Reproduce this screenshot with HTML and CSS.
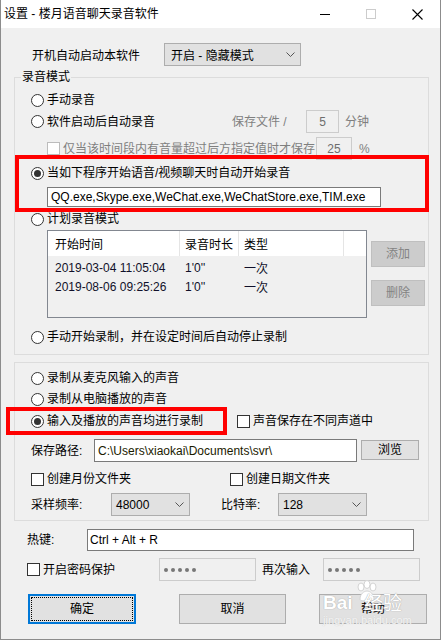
FILE: index.html
```html
<!DOCTYPE html>
<html lang="zh-CN">

<head>
    <meta charset="UTF-8">
    <meta name="viewport" content="width=device-width, initial-scale=1.0">
    <title>设置 - 楼月语音聊天录音软件</title>
    <link rel="stylesheet" href="styles.css">
</head>

<body>
    <div class="window">
        <div class="titlebar">
            <span class="title">设置 - 楼月语音聊天录音软件</span>
            <div class="caption">
                <span class="cap-btn">
                    <svg width="10" height="10" viewBox="0 0 10 10"><path d="M0 5.5h10" stroke="#000" stroke-width="1"/></svg>
                </span>
                <span class="cap-btn">
                    <svg width="10" height="10" viewBox="0 0 10 10"><rect x="0.5" y="0.5" width="9" height="9" fill="none" stroke="#cccccc"/></svg>
                </span>
                <span class="cap-btn">
                    <svg width="11" height="11" viewBox="0 0 11 11"><path d="M0.5 0.5l10 10M10.5 0.5l-10 10" stroke="#000" stroke-width="1.1"/></svg>
                </span>
            </div>
        </div>

        <div class="content">
            <div class="startup">
                <span class="startup-label">开机自动启动本软件</span>
                <div class="combo combo-startup">
                    <span>开启 - 隐藏模式</span>
                    <svg class="chev" width="9" height="5" viewBox="0 0 9 5"><path d="M0.5 0.5l4 4 4-4" fill="none" stroke="#555"/></svg>
                </div>
            </div>

            <!-- 录音模式 -->
            <div class="group group-mode">
                <span class="group-title">录音模式</span>

                <div class="opt">
                    <span class="radio"></span>
                    <span class="opt-text">手动录音</span>
                </div>

                <div class="opt opt-tall opt-auto">
                    <span class="radio"></span>
                    <span class="opt-text auto-text">软件启动后自动录音</span>
                    <span class="muted save-label">保存文件 /</span>
                    <span class="field field-off field-min">5</span>
                    <span class="muted unit">分钟</span>
                </div>

                <div class="opt opt-tall opt-vol">
                    <span class="check check-off"></span>
                    <span class="muted vol-text">仅当该时间段内有音量超过后方指定值时才保存</span>
                    <span class="field field-off field-pct">25</span>
                    <span class="muted unit-pct">%</span>
                </div>

                <div class="mark mark-chat">
                    <div class="opt">
                        <span class="radio on"></span>
                        <span class="opt-text">当如下程序开始语音/视频聊天时自动开始录音</span>
                    </div>
                    <div class="field field-exe">QQ.exe,Skype.exe,WeChat.exe,WeChatStore.exe,TIM.exe</div>
                </div>

                <div class="opt opt-plan">
                    <span class="radio"></span>
                    <span class="opt-text">计划录音模式</span>
                </div>

                <div class="plan">
                    <div class="list">
                        <div class="list-row list-head">
                            <span class="c1">开始时间</span>
                            <span class="c2">录音时长</span>
                            <span class="c3">类型</span>
                            <span class="c4"></span>
                        </div>
                        <div class="list-body">
                            <div class="list-row">
                                <span class="c1">2019-03-04 11:05:04</span>
                                <span class="c2">1'0''</span>
                                <span class="c3">一次</span>
                            </div>
                            <div class="list-row">
                                <span class="c1">2019-08-06 09:25:26</span>
                                <span class="c2">1'0''</span>
                                <span class="c3">一次</span>
                            </div>
                        </div>
                    </div>
                    <div class="plan-btns">
                        <span class="btn btn-off">添加</span>
                        <span class="btn btn-off">删除</span>
                    </div>
                </div>

                <div class="opt opt-timed">
                    <span class="radio"></span>
                    <span class="opt-text">手动开始录制，并在设定时间后自动停止录制</span>
                </div>
            </div>

            <!-- 声音来源 -->
            <div class="group group-src">
                <div class="opt opt-mic">
                    <span class="radio"></span>
                    <span class="opt-text">录制从麦克风输入的声音</span>
                </div>
                <div class="opt opt-pc">
                    <span class="radio"></span>
                    <span class="opt-text">录制从电脑播放的声音</span>
                </div>
                <div class="both-row">
                    <div class="mark mark-both">
                        <span class="radio on"></span>
                        <span class="opt-text">输入及播放的声音均进行录制</span>
                    </div>
                    <span class="check check-ch"></span>
                    <span class="opt-text">声音保存在不同声道中</span>
                </div>

                <div class="path-row">
                    <span class="path-label">保存路径:</span>
                    <span class="field field-path">C:\Users\xiaokai\Documents\svr\</span>
                    <span class="btn btn-browse">浏览</span>
                </div>

                <div class="opt opt-folders">
                    <span class="folder">
                        <span class="check"></span>
                        <span class="opt-text">创建月份文件夹</span>
                    </span>
                    <span class="check"></span>
                    <span class="opt-text">创建日期文件夹</span>
                </div>

                <div class="rate-row">
                    <span class="rate-label">采样频率:</span>
                    <div class="combo combo-rate">
                        <span>48000</span>
                        <svg class="chev" width="9" height="5" viewBox="0 0 9 5"><path d="M0.5 0.5l4 4 4-4" fill="none" stroke="#555"/></svg>
                    </div>
                    <span class="bit-label">比特率:</span>
                    <div class="combo combo-bit">
                        <span>128</span>
                        <svg class="chev" width="9" height="5" viewBox="0 0 9 5"><path d="M0.5 0.5l4 4 4-4" fill="none" stroke="#555"/></svg>
                    </div>
                </div>
            </div>

            <div class="hotkey-row">
                <span class="hotkey-label">热键:</span>
                <span class="field field-hotkey">Ctrl + Alt + R</span>
            </div>

            <div class="pwd-row">
                <span class="pwd-check">
                    <span class="check"></span>
                    <span class="opt-text">开启密码保护</span>
                </span>
                <span class="field field-off field-pwd"><i></i><i></i><i></i><i></i><i></i></span>
                <span class="again">再次输入</span>
                <span class="field field-off field-pwd"><i></i><i></i><i></i><i></i><i></i></span>
            </div>

            <div class="actions">
                <span class="btn btn-ok">确定</span>
                <span class="btn btn-cancel">取消</span>
                <span class="btn btn-help">帮助</span>
                <div class="watermark">
                    <svg class="paw" width="26" height="22" viewBox="0 0 26 22">
                        <g fill="#fff" stroke="#d4d4d4" stroke-width="1">
                            <ellipse cx="7" cy="7" rx="3" ry="4"/>
                            <ellipse cx="13" cy="4.5" rx="3" ry="4"/>
                            <ellipse cx="19" cy="7" rx="3" ry="4"/>
                            <path d="M6 19c0-5 4-8 7-8s7 3 7 8c0 2-3 2-7 2s-7 0-7-2z"/>
                        </g>
                    </svg>
                    <span class="wm-bai">Bai</span>
                    <span class="wm-jy">经验</span>
                    <span class="wm-url">jingyan.baidu.com</span>
                </div>
            </div>
        </div>
    </div>
</body>

</html>
```

FILE: styles.css
```css
* {
    padding: 0;
    margin: 0;
    box-sizing: border-box;
}

body {
    font-family: "Liberation Sans", "Noto Sans CJK SC", sans-serif;
    font-size: 12px;
    color: #000;
    background: #fff;
}

.window {
    width: 441px;
    height: 640px;
    border: 1px solid #8c8c8c;
    border-top: none;
    background: #f0f0f0;
    display: flex;
    flex-direction: column;
    overflow: hidden;
}

/* title bar */
.titlebar {
    height: 28px;
    background: #fff;
    display: flex;
    align-items: center;
}

.title {
    padding-left: 3px;
    line-height: 16px;
}

.caption {
    margin-left: auto;
    display: flex;
    height: 28px;
}

.cap-btn {
    width: 46px;
    display: flex;
    align-items: center;
    justify-content: center;
}

/* common bits */
.content {
    display: flex;
    flex-direction: column;
}

.opt {
    display: flex;
    align-items: center;
    height: 18px;
    line-height: 16px;
}

.opt-tall {
    height: 23px;
}

.opt-text {
    margin-left: 3px;
    white-space: nowrap;
}

.muted {
    color: #7f7f7f;
    white-space: nowrap;
}

.radio {
    width: 13px;
    height: 13px;
    flex: none;
    border: 1px solid #333;
    border-radius: 50%;
    background: #fff;
    display: inline-flex;
    align-items: center;
    justify-content: center;
    margin-left: 16px;
}

.radio.on::after {
    content: "";
    width: 7px;
    height: 7px;
    border-radius: 50%;
    background: #333;
}

.check {
    width: 13px;
    height: 13px;
    flex: none;
    border: 1px solid #333;
    background: #fff;
}

.check-off {
    border-color: #bcbcbc;
}

.field {
    display: flex;
    align-items: center;
    background: #fff;
    border: 1px solid #7a7a7a;
    white-space: nowrap;
    overflow: hidden;
}

.field-off {
    background: #f0f0f0;
    border-color: #cccccc;
    color: #6d6d6d;
    justify-content: center;
}

.btn {
    display: flex;
    align-items: center;
    justify-content: center;
    background: #e1e1e1;
    border: 1px solid #adadad;
    line-height: 16px;
}

.btn-off {
    background: #cccccc;
    border-color: #bfbfbf;
    color: #838383;
}

.combo {
    display: flex;
    align-items: center;
    background: #e1e1e1;
    border: 1px solid #adadad;
    padding-left: 4px;
}

.chev {
    margin-left: auto;
    margin-right: 5px;
}

/* startup row */
.startup {
    display: flex;
    align-items: center;
    margin-top: 15px;
    height: 23px;
}

.startup-label {
    width: 163px;
    padding-left: 31px;
}

.combo-startup {
    width: 137px;
    height: 23px;
    padding-left: 6px;
}

/* group boxes */
.group {
    position: relative;
    margin-left: 13px;
    width: 415px;
    border: 1px solid #dcdcdc;
}

.group-title {
    position: absolute;
    top: -9px;
    left: 6px;
    padding: 0 1px;
    line-height: 16px;
    background: #f0f0f0;
}

.group-mode {
    margin-top: 11px;
    padding-top: 13px;
    padding-bottom: 8px;
}

.opt-auto {
    margin-top: 1px;
}

.auto-text {
    width: 185px;
}

.save-label {
    width: 74px;
}

.field-min {
    width: 33px;
    height: 23px;
}

.unit {
    margin-left: 6px;
}

.opt-vol {
    margin-top: 4px;
}

.opt-vol .check {
    margin-left: 32px;
}

.vol-text {
    width: 253px;
    margin-left: 3px;
}

.field-pct {
    width: 36px;
    height: 23px;
}

.unit-pct {
    margin-left: 7px;
}

/* red marks */
.mark {
    outline: 4px solid #ff0000;
    position: relative;
}

.mark-chat {
    margin-top: -1px;
    margin-left: 4px;
    width: 406px;
    height: 49px;
    padding-top: 5px;
}

.mark-chat .radio {
    margin-left: 12px;
}

.field-exe {
    margin: 5px 0 0 28px;
    width: 334px;
    height: 20px;
    padding-left: 3px;
}

.opt-plan {
    margin-top: 2px;
}

/* schedule list */
.plan {
    display: flex;
    align-items: flex-start;
    margin-top: 2px;
}

.list {
    margin-left: 32px;
    width: 320px;
    height: 88px;
    border: 1px solid #828790;
}

.list-row {
    display: flex;
    height: 19px;
    align-items: center;
    white-space: nowrap;
}

.list-head {
    height: 25px;
    background: #fff;
    align-items: stretch;
}

.list-head span {
    display: flex;
    align-items: center;
    border-right: 1px solid #e5e5e5;
}

.list-head .c4 {
    border-right: none;
}

.c1 {
    width: 132px;
    padding-left: 7px;
}

.c2 {
    width: 59px;
    padding-left: 5px;
}

.c3 {
    width: 105px;
    padding-left: 5px;
}

.c4 {
    flex: 1;
}

.list-body {
    padding-top: 2px;
    color: #10102a;
}

.plan-btns {
    margin-left: 4px;
    padding-top: 11px;
    display: flex;
    flex-direction: column;
    gap: 13px;
}

.plan-btns .btn {
    width: 54px;
    height: 26px;
}

.opt-timed {
    margin-top: 10px;
}

/* source group */
.group-src {
    margin-top: 7px;
    padding-top: 6px;
    padding-bottom: 4px;
}

.opt-pc {
    margin-top: 3px;
}

.both-row {
    display: flex;
    align-items: center;
    margin-top: 3px;
    height: 20px;
    line-height: 16px;
}

.mark-both {
    display: flex;
    align-items: center;
    margin-left: -5px;
    width: 213px;
    height: 20px;
    padding-left: 21px;
}

.mark-both .radio {
    margin-left: 0;
}

.check-ch {
    margin-left: 14px;
}

.path-row {
    display: flex;
    align-items: flex-start;
    margin-top: 8px;
    line-height: 16px;
}

.path-label {
    width: 79px;
    padding-left: 16px;
    height: 23px;
    display: flex;
    align-items: center;
}

.field-path {
    width: 263px;
    height: 23px;
    padding-left: 3px;
    color: #1a1a00;
}

.btn-browse {
    margin: 1px 0 0 4px;
    width: 58px;
    height: 20px;
}

.opt-folders {
    margin-top: 8px;
}

.folder {
    display: flex;
    align-items: center;
    width: 215px;
}

.opt-folders .check:first-child {
    margin-left: 16px;
}

.rate-row {
    display: flex;
    align-items: center;
    margin-top: 5px;
    height: 23px;
    line-height: 16px;
}

.rate-label {
    width: 96px;
    padding-left: 16px;
}

.combo-rate {
    width: 79px;
    height: 23px;
}

.bit-label {
    margin-left: 31px;
    width: 57px;
}

.combo-bit {
    width: 89px;
    height: 23px;
}

/* bottom rows */
.hotkey-row {
    display: flex;
    align-items: center;
    margin-top: 8px;
    height: 22px;
    line-height: 16px;
}

.hotkey-label {
    width: 86px;
    padding-left: 26px;
}

.field-hotkey {
    width: 327px;
    height: 22px;
    padding-left: 2px;
}

.pwd-row {
    display: flex;
    align-items: center;
    margin-top: 7px;
    height: 23px;
    line-height: 16px;
}

.pwd-check {
    display: flex;
    align-items: center;
    width: 158px;
    padding-left: 26px;
}

.field-pwd {
    width: 97px;
    height: 23px;
    justify-content: flex-start;
    padding-left: 4px;
    gap: 3px;
}

.field-pwd i {
    width: 4px;
    height: 4px;
    border-radius: 50%;
    background: #777;
}

.again {
    width: 67px;
    padding-left: 6px;
}

.actions {
    position: relative;
    display: flex;
    margin-top: 13px;
    height: 30px;
}

.actions .btn {
    height: 30px;
}

.btn-ok {
    margin-left: 27px;
    width: 108px;
    border: 2px solid #0078d7;
    outline: 1px dotted #000;
    outline-offset: -4px;
}

.btn-cancel {
    margin-left: 43px;
    width: 107px;
}

.btn-help {
    margin-left: 33px;
    width: 108px;
}

/* baidu watermark over the help button */
.watermark {
    position: absolute;
    left: 321px;
    top: -14px;
    width: 90px;
    height: 46px;
    color: #fff;
    pointer-events: none;
}

.paw {
    position: absolute;
    left: 32px;
    top: 0;
}

.wm-bai {
    position: absolute;
    left: 1px;
    top: 13px;
    font-size: 19px;
    font-weight: bold;
    line-height: 20px;
    text-shadow: 0 0 1px #b0b0b0, 0 0 1px #b0b0b0;
}

.wm-jy {
    position: absolute;
    left: 42px;
    top: 14px;
    font-size: 19px;
    line-height: 20px;
    text-shadow: 0 0 1px #b0b0b0, 0 0 1px #b0b0b0;
}

.wm-url {
    position: absolute;
    left: 1px;
    top: 34px;
    font-size: 11px;
    line-height: 12px;
    color: #f4f4f4;
    text-shadow: 0 0 1px #c4c4c4;
}
```
